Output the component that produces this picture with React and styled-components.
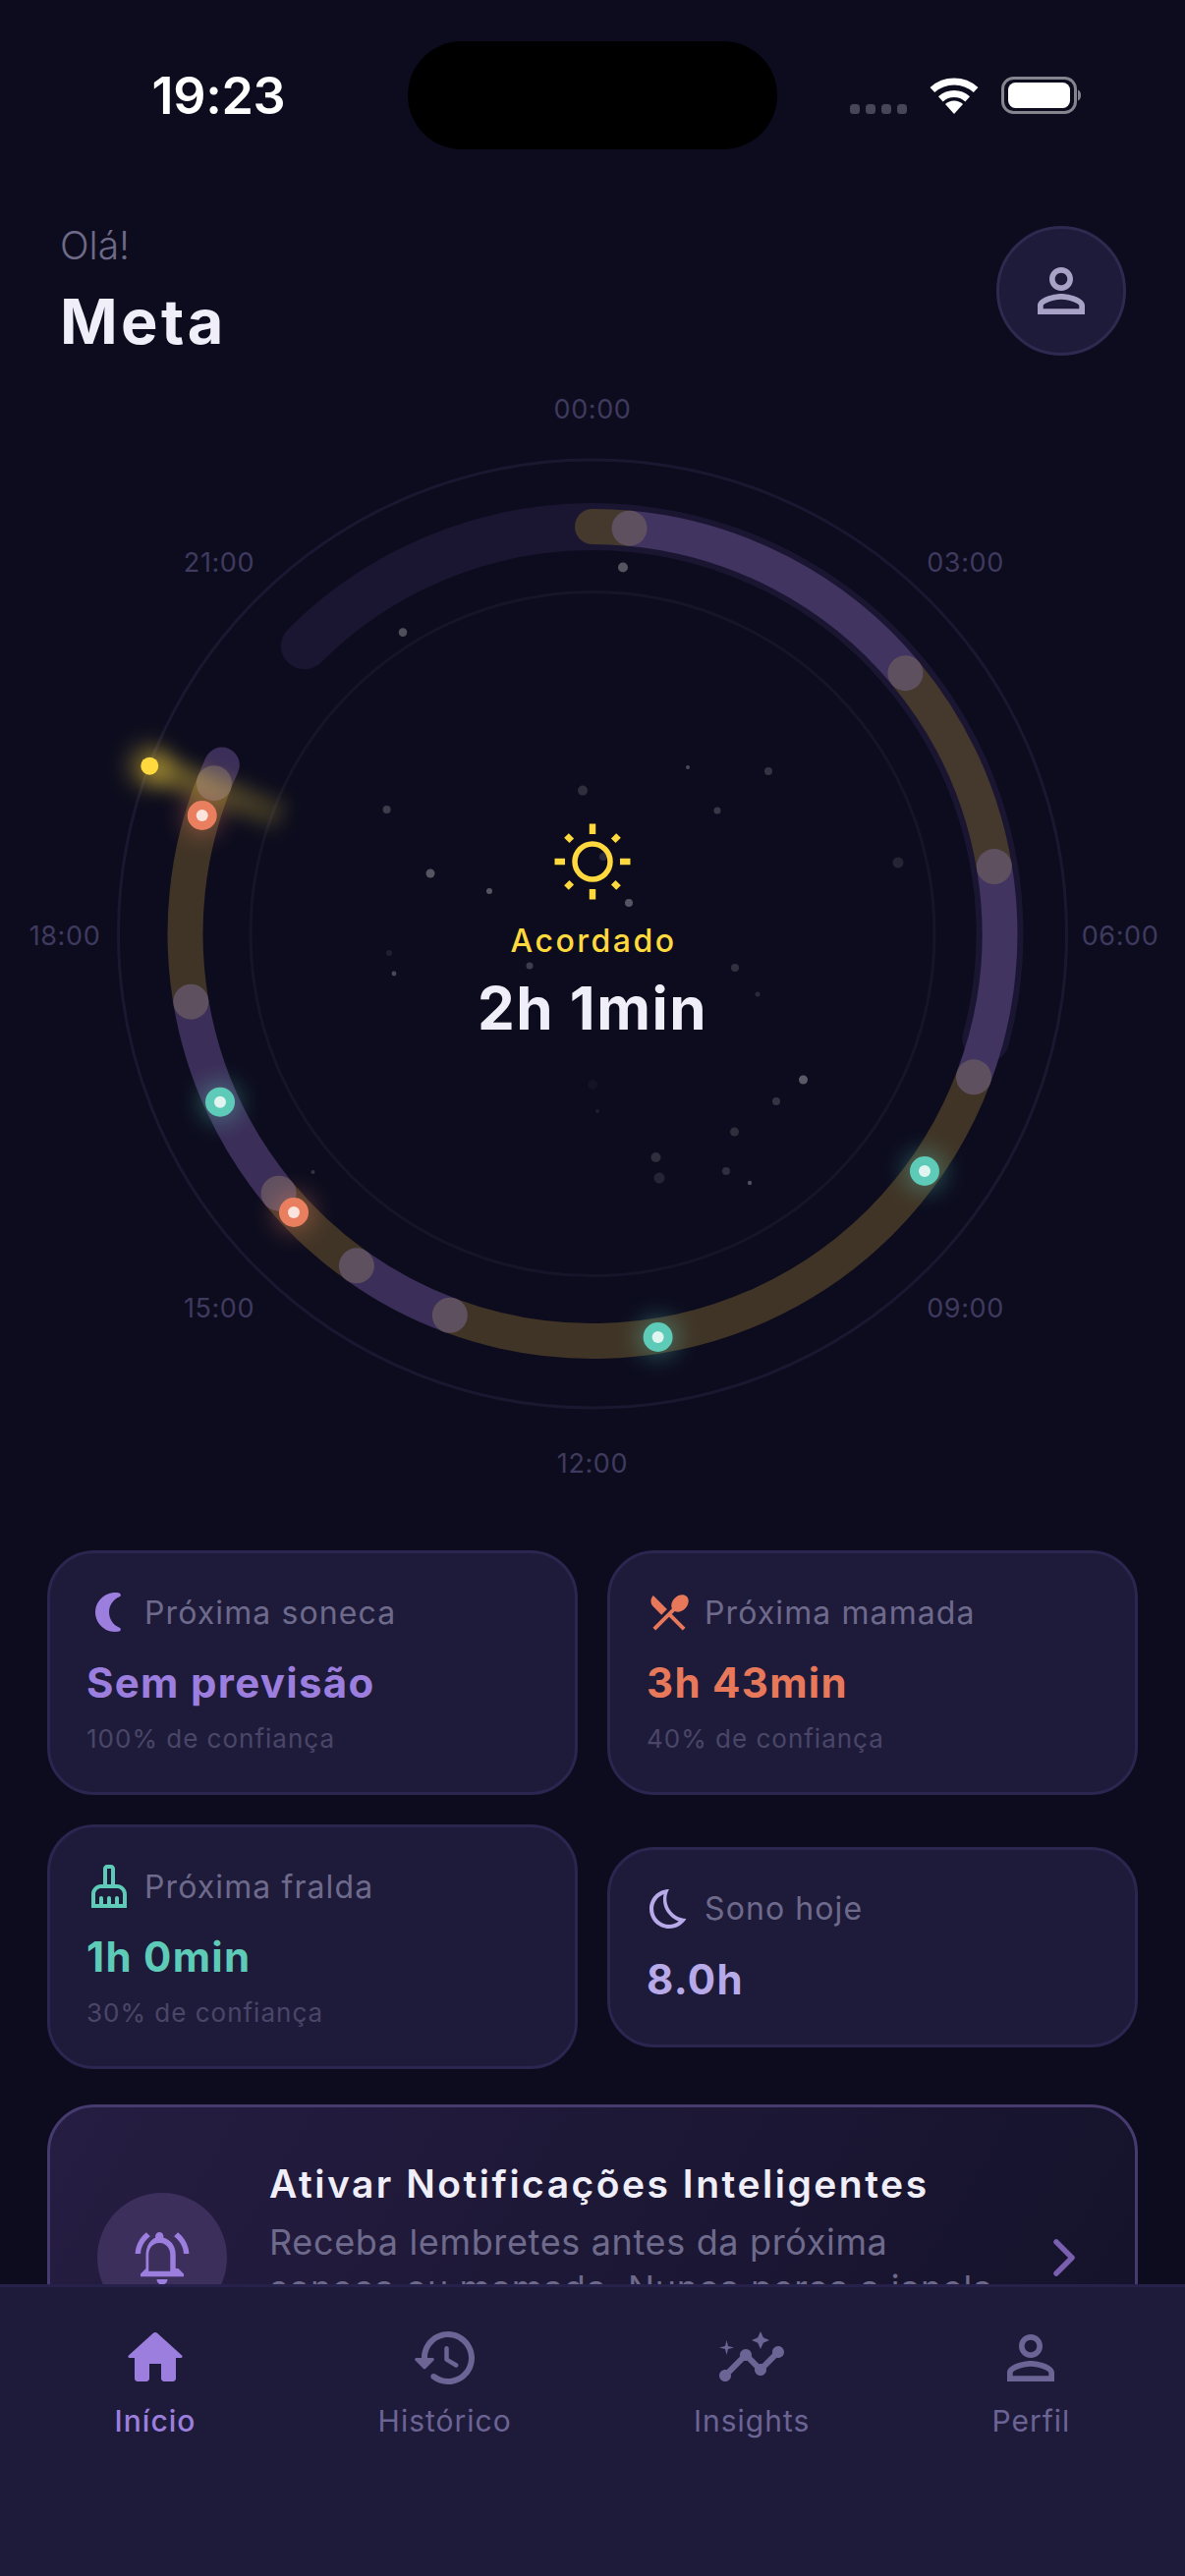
import React from 'react';
import styled, { createGlobalStyle } from 'styled-components';

const CX = 603;
const CY = 950.5;
const RING_R = 414.5;
const NOW = 290.75;

const GlobalStyle = createGlobalStyle`
    html, body {
        margin: 0;
        padding: 0;
        background-color: #0c0c1e;
        font-family: Inter, "Noto Sans", sans-serif;
    }
`;

const Screen = styled.div`
    width: 1206px;
    height: 2622px;
    display: flex;
    flex-direction: column;
    overflow: hidden;
    background-color: #0c0c1e;
`;
const Scroller = styled.div`
    flex: 1;
    min-height: 0;
    overflow: hidden;
`;

const StatusBar = styled.div`
    display: grid;
    grid-template-columns: 1fr 376px 1fr;
    height: 110px;
    padding: 42px 0 76px;
    align-items: center;
`;
const Clock = styled.div`
    padding-left: 30px;
    text-align: center;
    color: #ffffff;
    font-size: 52px;
    font-weight: 600;
    letter-spacing: -0.3px;
`;
const Island = styled.div`
    height: 110px;
    border-radius: 55px;
    background-color: #000000;
`;
const StatusIcons = styled.div`
    padding-left: 74px;
    display: flex;
    align-items: center;
`;

const Header = styled.header`
    display: flex;
    justify-content: space-between;
    align-items: center;
    height: 135px;
    padding: 0 60px 0 61px;
`;
const Hello = styled.div`
    font-size: 39px;
    line-height: 44px;
    font-weight: 300;
    color: #6e6a88;
`;
const Name = styled.div`
    margin-top: 19px;
    font-size: 63px;
    line-height: 72px;
    font-weight: 700;
    letter-spacing: 3.4px;
    color: #f0eef8;
`;
const Avatar = styled.div`
    width: 126px;
    height: 126px;
    border: 3px solid #2d2a4f;
    border-radius: 50%;
    background-color: #1e1b3a;
    display: flex;
    align-items: center;
    justify-content: center;
`;

const Dial = styled.section`
    position: relative;
    height: 1185px;
    margin-bottom: 30px;
`;
const DialSvg = styled.svg`
    display: block;
`;
const HourLabel = styled.text`
    font-size: 27px;
    letter-spacing: 0.6px;
    fill: #3f3a5e;
    text-anchor: middle;
    dominant-baseline: central;
`;
const DialCenter = styled.div`
    position: absolute;
    top: 474px;
    left: 0;
    right: 0;
    display: flex;
    flex-direction: column;
    align-items: center;
`;
const StateLabel = styled.div`
    margin-top: 21px;
    padding-left: 2px;
    font-size: 32px;
    line-height: 40px;
    font-weight: 500;
    letter-spacing: 2.5px;
    color: #ffd93d;
`;
const StateTime = styled.div`
    margin-top: 12px;
    font-size: 60px;
    line-height: 72px;
    font-weight: 700;
    letter-spacing: 1.5px;
    color: #f0eef8;
`;

const Cards = styled.div`
    display: grid;
    grid-template-columns: 1fr 1fr;
    gap: 30px;
    align-items: center;
    padding: 0 48px;
`;
const Card = styled.div`
    box-sizing: border-box;
    height: ${(p) => (p.$compact ? '204px' : '249px')};
    padding: 36px;
    border: 3px solid #2a2650;
    border-radius: 48px;
    background-color: #1e1b3a;
`;
const CardTitle = styled.div`
    display: flex;
    align-items: center;
    gap: 12px;
    height: 48px;
    font-size: 32px;
    letter-spacing: 1.1px;
    color: #6e6a8c;
`;
const CardValue = styled.div`
    margin-top: 24px;
    padding-left: 1px;
    font-size: 42px;
    line-height: 48px;
    font-weight: 700;
    letter-spacing: 1.3px;
    color: ${(p) => p.$color};
`;
const CardNote = styled.div`
    margin-top: 15px;
    padding-left: 1px;
    font-size: 26px;
    line-height: 36px;
    letter-spacing: 1px;
    color: #4a4668;
`;

const Promo = styled.div`
    box-sizing: border-box;
    display: flex;
    align-items: center;
    height: 312px;
    margin: 36px 48px 0;
    padding: 0 36px 0 48px;
    border: 3px solid #473a6e;
    border-radius: 48px;
    background: linear-gradient(120deg, #261d42, #14122a);
`;
const PromoBadge = styled.div`
    flex: none;
    width: 132px;
    height: 132px;
    margin-right: 42px;
    border-radius: 50%;
    background-color: #3d2f5c;
    display: flex;
    align-items: center;
    justify-content: center;
`;
const PromoText = styled.div`
    flex: 1;
    min-width: 0;
    align-self: flex-start;
    padding-top: 54px;
`;
const PromoTitle = styled.div`
    padding-left: 1px;
    font-size: 39px;
    line-height: 48px;
    font-weight: 600;
    letter-spacing: 2.5px;
    color: #f0eef8;
`;
const PromoBody = styled.div`
    margin-top: 12px;
    padding-left: 1px;
    font-size: 36px;
    line-height: 47px;
    letter-spacing: 0.65px;
    color: #6e6a8c;
`;
const PromoChevron = styled.svg`
    flex: none;
    margin-left: 24px;
    stroke: #7a5fb0;
    stroke-width: 5.5;
    stroke-linecap: round;
    stroke-linejoin: round;
    fill: none;
`;

const TabBar = styled.nav`
    box-sizing: border-box;
    flex: none;
    height: 297px;
    display: flex;
    justify-content: space-around;
    align-items: flex-start;
    padding: 36px 24px 0;
    border-top: 3px solid #25214a;
    background-color: #1e1b3a;
`;
const Tab = styled.div`
    display: flex;
    flex-direction: column;
    align-items: center;
    color: ${(p) => (p.$active ? '#9b7ede' : '#6b6494')};
`;
const TabLabel = styled.div`
    margin-top: 10px;
    font-size: 30px;
    line-height: 36px;
    font-weight: ${(p) => (p.$active ? 500 : 400)};
    letter-spacing: 1px;
`;
const Glyph = styled.svg`
    flex: none;
    display: block;
    fill: ${(p) => p.$color || 'currentColor'};
`;

const ICONS = {
    person: 'M12 5.9c1.16 0 2.1.94 2.1 2.1s-.94 2.1-2.1 2.1S9.9 9.16 9.9 8s.94-2.1 2.1-2.1m0 9c2.97 0 6.1 1.46 6.1 2.1v1.1H5.9V17c0-.64 3.13-2.1 6.1-2.1M12 4C9.79 4 8 5.79 8 8s1.79 4 4 4 4-1.79 4-4-1.79-4-4-4zm0 9c-2.67 0-8 1.34-8 4v3h16v-3c0-2.66-5.33-4-8-4z',
    home: 'M10 19v-5h4v5c0 .55.45 1 1 1h3c.55 0 1-.45 1-1v-7h1.7c.46 0 .68-.57.33-.87L12.67 3.6c-.38-.34-.96-.34-1.34 0l-8.36 7.53c-.34.3-.13.87.33.87H5v7c0 .55.45 1 1 1h3c.55 0 1-.45 1-1z',
    history: 'M13.26 3C8.17 2.86 4 6.95 4 12H2.21c-.45 0-.67.54-.35.85l2.79 2.8c.2.2.51.2.71 0l2.79-2.8c.31-.31.09-.85-.36-.85H6c0-3.9 3.18-7.05 7.1-7 3.72.05 6.85 3.18 6.9 6.9.05 3.91-3.1 7.1-7 7.1-1.61 0-3.1-.55-4.28-1.48-.4-.31-.96-.28-1.32.08-.42.43-.39 1.13.08 1.49C9 20.29 10.91 21 13 21c5.05 0 9.14-4.17 9-9.26-.13-4.69-4.05-8.61-8.74-8.74zm-.76 5c-.41 0-.75.34-.75.75v3.68c0 .35.19.68.49.86l3.12 1.85c.36.21.82.09 1.03-.26.21-.36.09-.82-.26-1.03l-2.88-1.71v-3.4c0-.4-.34-.74-.75-.74z',
    insights: 'M21 8c-1.45 0-2.26 1.44-1.93 2.51l-3.55 3.56c-.3-.09-.74-.09-1.04 0l-2.55-2.55C12.27 10.45 11.46 9 10 9c-1.45 0-2.27 1.44-1.93 2.52l-4.56 4.55C2.44 15.74 1 16.55 1 18c0 1.1.9 2 2 2 1.45 0 2.26-1.44 1.93-2.51l4.55-4.56c.3.09.74.09 1.04 0l2.55 2.55C12.73 16.55 13.54 18 15 18c1.45 0 2.27-1.44 1.93-2.52l3.56-3.55c1.07.33 2.51-.48 2.51-1.93 0-1.1-.9-2-2-2zM15 9l.94-2.07L18 6l-2.06-.93L15 3l-.92 2.07L12 6l2.08.93zM3.5 11L4 9l2-.5L4 8l-.5-2L3 8l-2 .5L3 9z',
    nap: 'M12.01 12c0-3.57 2.2-6.62 5.31-7.87.89-.36.75-1.69-.19-1.9-1.1-.24-2.27-.3-3.48-.14-4.51.6-8.12 4.31-8.59 8.83C4.44 16.93 9.13 22 15.01 22c.73 0 1.43-.08 2.12-.23.95-.21 1.1-1.53.2-1.9-3.22-1.29-5.33-4.41-5.32-7.87z',
    meal: 'M8.1 13.34l2.83-2.83L3.91 3.5c-1.56 1.56-1.56 4.09 0 5.66l4.19 4.18zm6.78-1.81c1.53.71 3.68.21 5.27-1.38 1.91-1.91 2.28-4.65.81-6.12-1.46-1.46-4.2-1.1-6.12.81-1.59 1.59-2.09 3.74-1.38 5.27L3.7 19.87l1.41 1.41L12 14.41l6.88 6.88 1.41-1.41L13.41 13l1.47-1.47z',
    diaper: 'M16 11h-1V3c0-1.1-.9-2-2-2h-2c-1.1 0-2 .9-2 2v8H8c-2.76 0-5 2.24-5 5v7h18v-7c0-2.76-2.24-5-5-5zm-5-8h2v8h-2V3zm8 18h-2v-3c0-.55-.45-1-1-1s-1 .45-1 1v3h-2v-3c0-.55-.45-1-1-1s-1 .45-1 1v3H9v-3c0-.55-.45-1-1-1s-1 .45-1 1v3H5v-5c0-1.65 1.35-3 3-3h8c1.65 0 3 1.35 3 3v5z',
    sleep: 'M9.27 4.49c-1.63 7.54 3.75 12.41 7.66 13.8C15.54 19.38 13.81 20 12.04 20c-4.41 0-8-3.59-8-8 0-3.45 2.05-6.18 5.23-7.51zM11.98 2.01C6.4 2.01 2 6.54 2 12c0 5.52 4.48 10 10.02 10 3.71 0 6.95-2.02 8.69-5.02-7.68-.18-12.54-8.55-8.73-14.97z',
    bell: 'M17 16v-5c0-3.07-1.63-5.64-4.5-6.32V4c0-.83-.67-1.5-1.5-1.5s-1.5.67-1.5 1.5v.68C7.64 5.36 6 7.92 6 11v5l-2 2v1h16v-1l-2-2zm-2 1H7v-6c0-2.48 1.51-4.5 4-4.5s4 2.02 4 4.5v6zm-3 5c1.1 0 2-.9 2-2h-4c0 1.1.9 2 2 2zM7.58 4.08 6.15 2.65C3.75 4.48 2.17 7.3 2.03 10.5h2c.15-2.65 1.51-4.97 3.55-6.42zM19.97 10.5h2c-.15-3.2-1.73-6.02-4.12-7.85l-1.42 1.43c2.02 1.45 3.39 3.77 3.54 6.42z',
};

function Icon({ name, size, color }) {
    return (
        <Glyph width={size} height={size} viewBox="0 0 24 24" $color={color}>
            <path d={ICONS[name]} />
        </Glyph>
    );
}

function polar(angle, r) {
    const a = (angle * Math.PI) / 180;
    return [CX + r * Math.sin(a), CY - r * Math.cos(a)];
}

function arc(from, to, r) {
    const [x1, y1] = polar(from, r);
    const [x2, y2] = polar(to, r);
    const large = to - from > 180 ? 1 : 0;
    return `M${x1} ${y1}A${r} ${r} 0 ${large} 1 ${x2} ${y2}`;
}

const WAKE = '#45392e';
const WAKE_LOW = '#403426';
const SLEEP = '#413460';
const SLEEP_LOW = '#3b2e58';

const SEGMENTS = [
    [0, 5.2, WAKE],
    [5.2, 50.2, SLEEP],
    [50.2, 80.5, WAKE],
    [80.5, 110.6, SLEEP],
    [110.6, 200.5, WAKE_LOW],
    [200.5, 215.4, SLEEP_LOW],
    [215.4, 230.4, WAKE_LOW],
    [230.4, 260.4, SLEEP_LOW],
    [260.4, 291.7, WAKE_LOW],
    [291.7, 294.5, SLEEP_LOW],
];

const JOINTS = [5.2, 50.2, 80.5, 110.6, 200.5, 215.4, 230.4, 260.4, 291.7];

const MARKERS = [
    [224, 1121.7, '#5ecbb8', '#e0f5f0'],
    [941, 1192, '#5ecbb8', '#e0f5f0'],
    [669.6, 1361, '#5ecbb8', '#e0f5f0'],
    [205.7, 830, '#e97f5f', '#fbe4dd'],
    [299, 1234, '#e97f5f', '#fbe4dd'],
];

const STARS = [
    [634, 577.5, 5, 0.3], [410, 643.6, 4.3, 0.28], [593, 804.6, 5, 0.14], [393.6, 824, 4, 0.2],
    [438, 889, 4.5, 0.3], [498, 907, 3, 0.3], [640, 919, 4, 0.3], [614, 872, 4, 0.12],
    [396, 970, 3, 0.08], [401, 991, 2.4, 0.25], [539, 983, 3.5, 0.2], [700, 781, 2, 0.25],
    [782, 785, 4, 0.16], [730, 825, 3.5, 0.18], [914, 878, 5.5, 0.1], [748, 985, 4, 0.15],
    [771, 1012, 2.5, 0.12], [817.5, 1099, 4.5, 0.32], [790, 1121, 4, 0.16], [747.5, 1152, 4.5, 0.14],
    [667.5, 1178, 5, 0.14], [671, 1199, 5.5, 0.1], [739, 1192, 4, 0.14], [763, 1204, 2.2, 0.28],
    [608, 1131, 2, 0.08], [603, 1104, 5, 0.03], [318.5, 1193, 2, 0.16],
];

const HOURS = [
    ['00:00', 603, 416], ['03:00', 982.5, 572.5], ['06:00', 1140, 952], ['09:00', 982.5, 1331],
    ['12:00', 603, 1489], ['15:00', 223, 1331], ['18:00', 66, 952], ['21:00', 223, 572.5],
];

const PREDICTIONS = [
    { icon: 'nap', iconColor: '#9b7ede', title: 'Próxima soneca', value: 'Sem previsão', color: '#9b7ede', note: '100% de confiança' },
    { icon: 'meal', iconColor: '#e8785a', title: 'Próxima mamada', value: '3h 43min', color: '#e8785a', note: '40% de confiança' },
    { icon: 'diaper', iconColor: '#5ecbb8', title: 'Próxima fralda', value: '1h 0min', color: '#5ecbb8', note: '30% de confiança' },
    { icon: 'sleep', iconColor: '#b8a9e8', title: 'Sono hoje', value: '8.0h', color: '#b8a9e8' },
];

const TABS = [
    { icon: 'home', label: 'Início', active: true },
    { icon: 'history', label: 'Histórico' },
    { icon: 'insights', label: 'Insights' },
    { icon: 'person', label: 'Perfil' },
];

const Wifi = styled.svg`
    margin-left: 23px;
    fill: none;
    stroke: #ffffff;
    stroke-width: 7;
`;
const Battery = styled.svg`
    margin-left: 23px;
`;

function SignalDots() {
    return (
        <svg width="58" height="37" viewBox="0 0 58 37" fill="#46465a">
            {[0, 16, 32, 48].map((x) => (
                <rect key={x} x={x} y="27" width="10" height="10" rx="3.5" />
            ))}
        </svg>
    );
}

function WifiIcon() {
    return (
        <Wifi width="50" height="37" viewBox="0 0 50 37">
            <path d="M2.9 12.5A33 33 0 0 1 47.1 12.5" />
            <path d="M11.3 21.8A20.5 20.5 0 0 1 38.7 21.8" />
            <path d="M25 37L16 27A13 13 0 0 1 34 27Z" fill="#ffffff" stroke="none" />
        </Wifi>
    );
}

function BatteryIcon() {
    return (
        <Battery width="81" height="38" viewBox="0 0 81 38">
            <rect x="1.5" y="1.5" width="74" height="35" rx="11" fill="none" stroke="#85858f" strokeWidth="3" />
            <rect x="7" y="6" width="63" height="26" rx="7.5" fill="#ffffff" />
            <path d="M78 13.5c2 .6 3 2.6 3 5.5s-1 4.9-3 5.5z" fill="#85858f" />
        </Battery>
    );
}

function Sun() {
    const rays = [0, 45, 90, 135, 180, 225, 270, 315];
    return (
        <svg width="80" height="80" viewBox="-40 -40 80 80" stroke="#ffd93d" fill="none">
            <circle r="18" strokeWidth="5.5" />
            {rays.map((a) => (
                <line
                    key={a}
                    y1={a % 90 === 0 ? -28 : -30}
                    y2={a % 90 === 0 ? -38.5 : -37.5}
                    strokeWidth="6.5"
                    transform={`rotate(${a})`}
                />
            ))}
        </svg>
    );
}

function ClockDial() {
    const [nowX, nowY] = polar(NOW, 482);
    const [tailX, tailY] = polar(NOW, 338);
    const [startX, startY] = polar(0, RING_R);
    const [endX, endY] = polar(294.5, RING_R);
    return (
        <DialSvg width="1206" height="1185" viewBox="0 363 1206 1185" fill="none">
            <defs>
                <filter id="soft" x="-100%" y="-100%" width="300%" height="300%">
                    <feGaussianBlur stdDeviation="12" />
                </filter>
                <filter id="beam" x="-30%" y="-80%" width="160%" height="260%" filterUnits="objectBoundingBox">
                    <feGaussianBlur stdDeviation="9" />
                </filter>
                <linearGradient id="nowBeam" gradientUnits="userSpaceOnUse" x1={nowX} y1={nowY} x2={tailX} y2={tailY}>
                    <stop offset="0" stopColor="#ffd93d" stopOpacity="0.4" />
                    <stop offset="1" stopColor="#ffd93d" stopOpacity="0.16" />
                </linearGradient>
            </defs>

            <circle cx={CX} cy={CY} r="482.5" stroke="#1a1830" strokeWidth="3" />
            <circle cx={CX} cy={CY} r="348" stroke="#161429" strokeWidth="3" />

            {STARS.map(([x, y, r, o]) => (
                <circle key={`${x}-${y}`} cx={x} cy={y} r={r} fill="#ffffff" opacity={o} />
            ))}

            <path d={arc(-45, 105, RING_R)} stroke="#1a1530" strokeWidth="48" strokeLinecap="round" />

            <circle cx={startX} cy={startY} r="18" fill={WAKE} />
            <circle cx={endX} cy={endY} r="18" fill={SLEEP_LOW} />
            {SEGMENTS.map(([from, to, color]) => (
                <path key={from} d={arc(from, to, RING_R)} stroke={color} strokeWidth="36" />
            ))}
            {JOINTS.map((a) => {
                const [x, y] = polar(a, RING_R);
                return <circle key={a} cx={x} cy={y} r="18" fill="#5f5060" />;
            })}

            <line x1={nowX} y1={nowY} x2={tailX} y2={tailY} stroke="url(#nowBeam)" strokeWidth="30" filter="url(#beam)" />
            <circle cx={nowX} cy={nowY} r="20" fill="#ffd93d" opacity="0.4" filter="url(#soft)" />
            <circle cx={nowX} cy={nowY} r="9" fill="#ffd93d" />

            {MARKERS.map(([x, y, color, core]) => (
                <g key={x}>
                    <circle cx={x} cy={y} r="20" fill={color} opacity="0.4" filter="url(#soft)" />
                    <circle cx={x} cy={y} r="15" fill={color} />
                    <circle cx={x} cy={y} r="6" fill={core} />
                </g>
            ))}

            {HOURS.map(([text, x, y]) => (
                <HourLabel key={text} x={x} y={y}>{text}</HourLabel>
            ))}
        </DialSvg>
    );
}

export default function App() {
    return (
        <Screen>
            <GlobalStyle />
            <Scroller>
                <StatusBar>
                    <Clock>19:23</Clock>
                    <Island />
                    <StatusIcons>
                        <SignalDots />
                        <WifiIcon />
                        <BatteryIcon />
                    </StatusIcons>
                </StatusBar>

                <Header>
                    <div>
                        <Hello>Olá!</Hello>
                        <Name>Meta</Name>
                    </div>
                    <Avatar>
                        <Icon name="person" size={72} color="#a8a2c6" />
                    </Avatar>
                </Header>

                <Dial>
                    <ClockDial />
                    <DialCenter>
                        <Sun />
                        <StateLabel>Acordado</StateLabel>
                        <StateTime>2h 1min</StateTime>
                    </DialCenter>
                </Dial>

                <Cards>
                    {PREDICTIONS.map((item) => (
                        <Card key={item.title} $compact={!item.note}>
                            <CardTitle>
                                <Icon name={item.icon} size={48} color={item.iconColor} />
                                {item.title}
                            </CardTitle>
                            <CardValue $color={item.color}>{item.value}</CardValue>
                            {item.note && <CardNote>{item.note}</CardNote>}
                        </Card>
                    ))}
                </Cards>

                <Promo>
                    <PromoBadge>
                        <Icon name="bell" size={66} color="#9b7ede" />
                    </PromoBadge>
                    <PromoText>
                        <PromoTitle>Ativar Notificações Inteligentes</PromoTitle>
                        <PromoBody>Receba lembretes antes da próxima soneca ou mamada. Nunca perca a janela</PromoBody>
                    </PromoText>
                    <PromoChevron width="72" height="72" viewBox="0 0 72 72">
                        <path d="M28 20L44 36L28 52" />
                    </PromoChevron>
                </Promo>
            </Scroller>

            <TabBar>
                {TABS.map((tab) => (
                    <Tab key={tab.label} $active={tab.active}>
                        <Icon name={tab.icon} size={72} />
                        <TabLabel $active={tab.active}>{tab.label}</TabLabel>
                    </Tab>
                ))}
            </TabBar>
        </Screen>
    );
}
